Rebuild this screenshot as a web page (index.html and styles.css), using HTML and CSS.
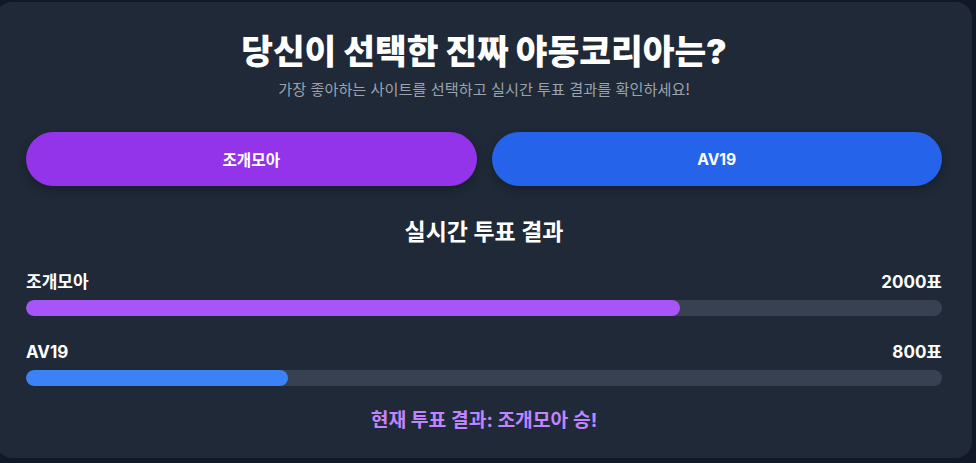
FILE: index.html
```html
<!DOCTYPE html>
<html lang="ko">
<head>
  <meta charset="UTF-8" />
  <title>실시간 투표</title>
  <meta name="viewport" content="width=device-width, initial-scale=1.0" />
  <link rel="stylesheet" href="styles.css">
</head>
<body>
  <div class="card">
    <h1 class="title">당신이 선택한 진짜 야동코리아는?</h1>
    <p class="subtitle">가장 좋아하는 사이트를 선택하고 실시간 투표 결과를 확인하세요!</p>

    <div class="vote-buttons">
      <button class="vote-btn purple">조개모아</button>
      <button class="vote-btn blue">AV19</button>
    </div>

    <h2 class="section-title">실시간 투표 결과</h2>

    <div class="result-row">
      <div class="row-head">
        <span>조개모아</span>
        <span>2000표</span>
      </div>
      <div class="track"><div class="fill purple-fill" style="width: 71.43%"></div></div>
    </div>

    <div class="result-row">
      <div class="row-head">
        <span>AV19</span>
        <span>800표</span>
      </div>
      <div class="track"><div class="fill blue-fill" style="width: 28.57%"></div></div>
    </div>

    <p class="winner">현재 투표 결과: 조개모아 승!</p>
  </div>
</body>
</html>
```

FILE: styles.css
```css
/* RESET */
* { box-sizing: border-box; margin: 0; padding: 0; }
html, body { width: 100%; height: 100%; overflow: hidden; }

body {
  background: #111827;
  font-family: Inter, "Noto Sans CJK KR", sans-serif;
  color: #fff;
  padding: 2px 4px 0 0;
}

/* CARD */
.card {
  background: #1f2937;
  border-radius: 16px;
  margin-left: -4px;
  height: 456px;
  padding: 28px 30px 0 30px;
}

.title {
  text-align: center;
  font-size: 34.5px;
  font-weight: 900;
  line-height: 44px;
}
.subtitle {
  text-align: center;
  color: #9ca3af;
  font-size: 15.2px;
  line-height: 20px;
  margin-top: 6px;
}

/* BUTTONS */
.vote-buttons {
  display: flex;
  gap: 15px;
  margin-top: 32px;
}
.vote-btn {
  flex: 1;
  height: 54px;
  border: none;
  border-radius: 27px;
  color: #fff;
  font-family: inherit;
  font-size: 15.7px;
  font-weight: 700;
  box-shadow: 0 4px 8px rgba(0, 0, 0, 0.25);
}
.vote-btn.purple { background: #9333ea; }
.vote-btn.blue { background: #2563eb; }

.section-title {
  text-align: center;
  font-size: 23px;
  font-weight: 700;
  line-height: 28px;
  margin-top: 32px;
}

/* RESULT BARS */
.result-row { margin-top: 26px; }
.row-head {
  display: flex;
  justify-content: space-between;
  font-size: 17px;
  font-weight: 700;
  line-height: 20px;
  margin-bottom: 8px;
}
.track {
  height: 16px;
  background: #374151;
  border-radius: 8px;
  overflow: hidden;
}
.fill { height: 100%; border-radius: 8px; }
.purple-fill { background: #a855f7; }
.blue-fill { background: #3b82f6; }

.winner {
  text-align: center;
  color: #c084fc;
  font-size: 19.3px;
  font-weight: 700;
  line-height: 24px;
  margin-top: 22px;
}
```
